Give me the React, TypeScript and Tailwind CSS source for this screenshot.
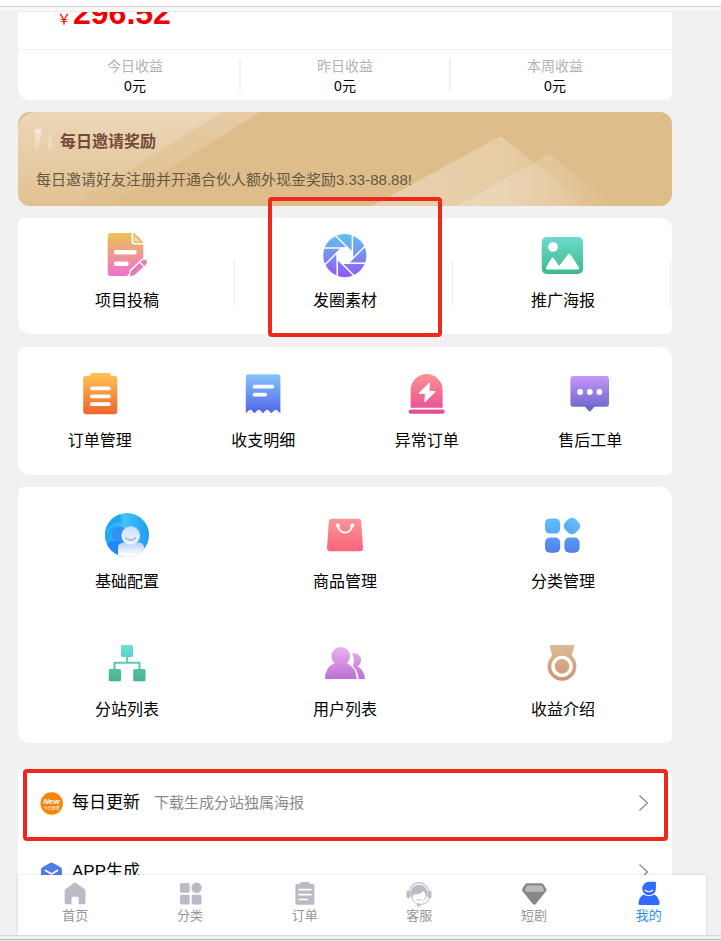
import type { ReactNode } from "react"

type GradientIconProps = {
  id: string
  from: string
  to: string
  children: ReactNode
}

// 44px menu icon, children can paint with url(#id)
function GradientIcon({ id, from, to, children }: GradientIconProps) {
  return (
    <svg className="h-11 w-11 overflow-visible" viewBox="0 0 44 44" fill={`url(#${id})`} aria-hidden="true">
      <defs>
        <linearGradient id={id} gradientUnits="userSpaceOnUse" x1="0" y1="2" x2="0" y2="42">
          <stop offset="0" stopColor={from} />
          <stop offset="1" stopColor={to} />
        </linearGradient>
      </defs>
      {children}
    </svg>
  )
}

function ArticleIcon() {
  return (
    <GradientIcon id="g-article" from="#ecc055" to="#ee72cc">
      <path d="M6 0h20.500v8.500a3 3 0 0 0 3 3h8.800V25L22 43H6a3.300 3.300 0 0 1-3.300-3.300V3.300A3.300 3.300 0 0 1 6 0Z" />
      <path d="M28.300 0h1L37.800 8.700v1.200h-7.500a2 2 0 0 1-2-2Z" />
      <path d="M29.500 3v4.300q0 1.400 1.400 1.400h4.300Z" fill="#f3dfb4" />
      <path d="M11 19.300h18.500M11 30.700h10.500" stroke="#fff" strokeWidth="4.400" strokeLinecap="round" />
      <path
        d="m24 44.500 1.200-6.800 9.800-9.200 2.200-1.800a3.300 3.300 0 0 1 4.700 4.600l-2 2.100-10 9.200Z"
        stroke="#fff"
        strokeWidth="1.400"
        fill="#e77cb4"
      />
      <path d="m34.500 29 4.600 4.600" stroke="#fff" strokeWidth="1.200" />
    </GradientIcon>
  )
}

function ApertureIcon() {
  return (
    <GradientIcon id="g-aperture" from="#5fc0ee" to="#8f5cf6">
      <circle cx="21.800" cy="22.600" r="21.600" />
      <g transform="translate(21.800 22.600)" stroke="#fff" strokeWidth="1.500">
        <path d="M7.400-3.100v6.200L3.100 7.400h-6.200L-7.400 3.100v-6.200l4.300-4.300h6.200Z" fill="#fff" />
        {[0, 45, 90, 135, 180, 225, 270, 315].map((angle) => (
          <path key={angle} d="M7.600-20.500V3.100" transform={`rotate(${angle})`} />
        ))}
      </g>
    </GradientIcon>
  )
}

function PosterIcon() {
  return (
    <GradientIcon id="g-poster" from="#70dcd2" to="#3db888">
      <rect x=".7" y="4" width="41.300" height="37" rx="5" />
      <circle cx="12" cy="14" r="4.800" fill="#fff" />
      <path
        d="m5.500 34.500 5.200-8.800q1-1.500 2 0l5.300 8L27 22q1.200-1.500 2.400 0l8.100 12.500q.8 1.500-1 1.500H6.500Q4.700 36 5.500 34.500Z"
        fill="#fff"
        stroke="#fff"
      />
    </GradientIcon>
  )
}

function ClipboardIcon() {
  return (
    <GradientIcon id="g-clipboard" from="#fcc252" to="#f0652f">
      <path d="M14 1h17q1.700 0 1.700 2v.8H36q3.300 0 3.300 3.300V39q0 3.300-3.300 3.300H8.600Q5.200 42.300 5.200 39V7.100q0-3.300 3.400-3.300h3.600V3q0-2 1.800-2Z" />
      <path d="M13.900 16.300h17M13.900 24.300h17M13.900 32.200h17" stroke="#fff" strokeWidth="3.800" strokeLinecap="round" />
    </GradientIcon>
  )
}

function ReceiptIcon() {
  return (
    <GradientIcon id="g-receipt" from="#86c6fa" to="#5062e6">
      <path d="M7.800 2.300h28.600q3 0 3 3v36L36 38.300q-1.300-1-2.600 0l-3 3-3-3q-1.300-1-2.600 0l-2.800 3-2.900-3q-1.300-1-2.600 0l-3 3-3-3q-1.300-1-2.600 0l-3.100 3v-36q0-3 3-3Z" />
      <path d="M13.600 14.700h17.800M13.600 22.700h10.600" stroke="#fff" strokeWidth="3.800" strokeLinecap="round" />
    </GradientIcon>
  )
}

function AlarmIcon() {
  return (
    <GradientIcon id="g-alarm" from="#fb9292" to="#e64a93">
      <path d="M5.600 35.700V18a16 16 0 0 1 32 0v17.700Z" />
      <rect x="3.600" y="37.500" width="36" height="4.300" rx="2.100" />
      <path d="M24.500 11 14 21.300l6.500.4-.7 8.300 10.300-10.300-6.300-.6Z" fill="#fff" stroke="#fff" strokeLinejoin="round" />
    </GradientIcon>
  )
}

function ChatIcon() {
  return (
    <GradientIcon id="g-chat" from="#cb98fc" to="#5d5fc6">
      <path d="M5.400 4H38q3 0 3 3v24.700q0 3-3 3H26.500l-3.600 4.100q-1.200 1.500-2.400 0l-3.600-4.100H5.400q-3 0-3-3V7q0-3 3-3Z" />
      <g fill="#fff">
        <circle cx="12.200" cy="20" r="2.900" />
        <circle cx="21.800" cy="20" r="2.900" />
        <circle cx="31.400" cy="20" r="2.900" />
      </g>
    </GradientIcon>
  )
}

function ProfileIcon() {
  return (
    <svg className="h-11 w-11" viewBox="0 0 44 44" aria-hidden="true">
      <defs>
        <linearGradient id="g-profile-bg" x1="0" y1="0" x2="1" y2="0">
          <stop offset="0" stopColor="#1ea4f6" />
          <stop offset=".45" stopColor="#45c3fb" />
          <stop offset="1" stopColor="#1f9bf0" />
        </linearGradient>
        <linearGradient id="g-profile-head" x1="0" y1="0" x2="0" y2="1">
          <stop offset="0" stopColor="#cbdffe" />
          <stop offset="1" stopColor="#eff4ff" />
        </linearGradient>
        <linearGradient id="g-profile-body" x1="0" y1="0" x2="0" y2="1">
          <stop offset="0" stopColor="#b6cdfb" />
          <stop offset=".85" stopColor="#fff" />
        </linearGradient>
        <clipPath id="c-profile">
          <circle cx="22" cy="22" r="22" />
        </clipPath>
      </defs>
      <g clipPath="url(#c-profile)">
        <rect width="44" height="44" fill="url(#g-profile-bg)" />
        <path d="M0 0h15l2 11Q6 13 1 27H0Z" fill="#20a6f5" />
        <path d="M1 26Q3 12 17 11l-1-2Q6 11 2 18Z" fill="#3fbdfb" />
        <circle cx="14.500" cy="21.500" r="8" fill="#3391f4" />
        <path d="M2 44V33q1-5 7-5h9v16Z" fill="#1e88fb" />
        <path d="M13 44V35q0-5.500 6-5.500h14q6 0 6 5.500v9Z" fill="url(#g-profile-body)" />
        <circle cx="25.700" cy="22.500" r="9.300" fill="url(#g-profile-head)" />
        <path d="M20.700 25q4.800 4.500 9.800 0" fill="none" stroke="#84aef4" strokeWidth="1.300" strokeLinecap="round" />
      </g>
    </svg>
  )
}

function BagIcon() {
  return (
    <GradientIcon id="g-bag" from="#fb9b9b" to="#f95f79">
      <path d="M9 5.700h26q3 0 3.200 3L40 35q0 3.300-3.200 3.300H7.200Q4 38.300 4 35L5.800 8.700q.2-3 3.200-3Z" />
      <g fill="#fff">
        <circle cx="14.800" cy="12.500" r="2.100" />
        <circle cx="29.200" cy="12.500" r="2.100" />
      </g>
      <path d="M14.800 12.500c1.500 9.500 13 9.500 14.400 0" fill="none" stroke="#fff" strokeWidth="1.900" />
    </GradientIcon>
  )
}

function CategoryIcon() {
  return (
    <GradientIcon id="g-category" from="#61c8fd" to="#5479e8">
      <rect x="4" y="5.400" width="15.200" height="15.200" rx="5" />
      <rect x="23.600" y="5.600" width="14.800" height="14.800" rx="5.600" transform="rotate(45 31 13)" />
      <rect x="4" y="24.500" width="15.200" height="15.200" rx="5" />
      <rect x="23.400" y="24.500" width="15.200" height="15.200" rx="5" />
    </GradientIcon>
  )
}

function SiteTreeIcon() {
  return (
    <GradientIcon id="g-tree" from="#68e6df" to="#47ad88">
      <rect x="16" y="4" width="12" height="12" rx="1.500" />
      <rect x="3.700" y="28" width="12.300" height="12.200" rx="1.500" />
      <rect x="28.200" y="28" width="12.300" height="12.200" rx="1.500" />
      <path d="M21 15h2v5.700h12.500V29h-2v-6.300h-23V29h-2v-8.300H21Z" />
    </GradientIcon>
  )
}

function UsersIcon() {
  return (
    <GradientIcon id="g-users" from="#efbaf4" to="#b767ce">
      <path d="M29 12.500a7 7 0 0 1 5.500 12.800Q41 28.500 42 38h-6.300Q35 30 29.800 25q2.800-6-.8-12.500Z" />
      <circle cx="17.700" cy="15.200" r="9.300" />
      <path d="M12 22h11.500Q33 25.500 33.700 38H2Q2 26 12 22Z" />
    </GradientIcon>
  )
}

function MedalIcon() {
  return (
    <GradientIcon id="g-medal" from="#dabf95" to="#cf8f78">
      <path d="M9.500 4h23q1 0 .8 1l-3 11-1.300 4H13l-1.600-4-2.700-11q-.2-1 .8-1Z" />
      <circle cx="21" cy="25.400" r="14.400" />
      <circle cx="21" cy="25.400" r="9" fill="none" stroke="#fff" strokeWidth="3.400" />
    </GradientIcon>
  )
}

const stats = [
  { label: "今日收益", value: "0元" },
  { label: "昨日收益", value: "0元" },
  { label: "本周收益", value: "0元" },
]

const promoItems = [
  { label: "项目投稿", icon: <ArticleIcon /> },
  { label: "发圈素材", icon: <ApertureIcon />, marked: true },
  { label: "推广海报", icon: <PosterIcon /> },
]

const orderItems = [
  { label: "订单管理", icon: <ClipboardIcon /> },
  { label: "收支明细", icon: <ReceiptIcon /> },
  { label: "异常订单", icon: <AlarmIcon /> },
  { label: "售后工单", icon: <ChatIcon /> },
]

const manageItems = [
  { label: "基础配置", icon: <ProfileIcon /> },
  { label: "商品管理", icon: <BagIcon /> },
  { label: "分类管理", icon: <CategoryIcon /> },
  { label: "分站列表", icon: <SiteTreeIcon /> },
  { label: "用户列表", icon: <UsersIcon /> },
  { label: "收益介绍", icon: <MedalIcon /> },
]

const tabs = [
  {
    label: "首页",
    icon: (
      <path d="M10.500 1.200q1.500-1 3 0l7.700 5.600q1.200 1 1.200 2.400v11.600q0 1.500-1.500 1.500h-5.300v-6q0-1.500-1.500-1.500H10q-1.500 0-1.500 1.500v6H3.200q-1.500 0-1.500-1.500V9.200q0-1.400 1.200-2.400Z" />
    ),
  },
  {
    label: "分类",
    icon: (
      <>
        <rect x="2" y="1" width="9.700" height="9.700" rx="1.500" />
        <circle cx="18.600" cy="5.800" r="5.200" />
        <rect x="2" y="12.700" width="9.700" height="9.700" rx="1.500" />
        <rect x="13.700" y="12.700" width="9.800" height="9.700" rx="1.500" />
      </>
    ),
  },
  {
    label: "订单",
    icon: (
      <>
        <path d="M8.500 0h7q1 0 1.500 2h2.800q1.600 0 1.600 1.600v17.600q0 1.600-1.600 1.600H4q-1.600 0-1.600-1.600V3.600Q2.400 2 4 2h3q.5-2 1.500-2Z" />
        <path d="M6 7.700h12M6 12.600h12M6 17.500h8" stroke="#fff" strokeWidth="1.700" strokeLinecap="round" />
      </>
    ),
  },
  {
    label: "客服",
    icon: (
      <>
        <path d="M2.500 10a9.500 9.300 0 0 1 19 0" fill="none" stroke="currentColor" strokeWidth="1.200" />
        <path d="M3.700 14C2.700 6.500 7 2.700 12 2.700S21.300 6.500 20.300 14l-1.500 1q-.2-4-2.300-6.300Q13 12.800 7.500 12.300 5.500 13 5.200 16Z" />
        <rect x="-.5" y="8.500" width="3.800" height="7.800" rx="1.800" />
        <rect x="20.700" y="8.500" width="3.800" height="7.800" rx="1.800" />
        <path
          d="M4.500 15q1.500 5 5.300 6.500M19.200 14.500q-.8 3.500-3.200 5M22.500 16q-2 6.500-11 6.700M9.300 17.300q2.700 2.200 5.400 0"
          fill="none"
          stroke="currentColor"
          strokeWidth="1"
        />
        <circle cx="11.500" cy="22.800" r="1.900" />
      </>
    ),
  },
  {
    label: "短剧",
    icon: (
      <>
        <path d="M5 1.200h14.500q1 0 1.700.9l3 4.600q.8 1.300-.2 2.500L14 21.800q-1.700 2-3.400 0L.5 9.200q-1-1.200-.2-2.500l3-4.600q.7-.9 1.700-.9Z" fill="#888" />
        <path d="M6 3.600h13q1 0 1.500.9l1.200 2.700q.7 2.500-1.500 2.500H4.600q-2 0-1.300-2.500l1.200-2.700q.5-.9 1.500-.9Z" fill="#bbb" />
      </>
    ),
  },
  {
    label: "我的",
    active: true,
    icon: (
      <>
        <path d="M11.500-.2h6.600q.8 0 .8.800v5.600a6.800 6.800 0 1 1-7.400-6.400Z" />
        <path d="M8 8.300q3.900 3 7.800 0" fill="none" stroke="#fff" strokeWidth="1.100" strokeLinecap="round" />
        <path d="M6.500 12.500q5.300 3.600 10.800 0 4.800 2.500 5.200 9 0 1.500-1.200 1.500H2.700q-1.200 0-1.200-1.500.4-6.500 5-9Z" />
      </>
    ),
  },
]

type MenuLinkProps = {
  label: string
  icon: ReactNode
  className: string
  children?: ReactNode
}

function MenuLink({ label, icon, className, children }: MenuLinkProps) {
  return (
    <a href="#" className={`relative flex flex-col items-center ${className}`}>
      {icon}
      <span className="text-base leading-6">{label}</span>
      {children}
    </a>
  )
}

function Chevron() {
  return (
    <svg className="h-4 w-4" viewBox="0 0 16 16" fill="none" stroke="#808080" aria-hidden="true">
      <path d="m6.500.5 8 7.500-8 7.500" strokeWidth="1.100" />
    </svg>
  )
}

function InviteBanner() {
  return (
    <section className="relative overflow-hidden rounded-xl bg-[#dfbd8a] px-[18px] pb-[14px] pt-[18px]">
      <svg className="absolute left-0 top-0 h-full w-[260px]" viewBox="0 0 260 94" aria-hidden="true">
        <defs>
          <linearGradient id="g-shine" x1="0" y1="0" x2="0" y2="1">
            <stop offset="0" stopColor="#fff" stopOpacity=".22" />
            <stop offset="1" stopColor="#fff" stopOpacity=".03" />
          </linearGradient>
          <linearGradient id="g-quote" x1="0" y1="0" x2="0" y2="1">
            <stop offset="0" stopColor="#fff" stopOpacity=".5" />
            <stop offset="1" stopColor="#fff" stopOpacity=".15" />
          </linearGradient>
        </defs>
        <path d="M0 94V16Q2 2 17 0h187L54 94Z" fill="url(#g-shine)" />
        <path d="M0 94V16Q2 2 17 0h225L92 94Z" fill="url(#g-shine)" />
        <path d="M17 17h7l-4 21h-3ZM32 21l3.500 17H29Z" fill="url(#g-quote)" />
      </svg>
      <svg className="absolute right-[54px] top-0 h-full w-[250px]" viewBox="350 0 250 94" aria-hidden="true">
        <defs>
          <linearGradient id="g-peak" x1="0" y1="0" x2="1" y2="0">
            <stop offset="0" stopColor="#fff" stopOpacity=".3" />
            <stop offset=".6" stopColor="#fff" stopOpacity=".24" />
            <stop offset="1" stopColor="#fff" stopOpacity=".02" />
          </linearGradient>
        </defs>
        <path d="m354 94 129-70 86 70Z" fill="url(#g-peak)" />
        <path d="m439 94 92-52 65 52Z" fill="url(#g-peak)" opacity=".6" />
      </svg>
      <h2 className="relative pl-6 text-base font-bold leading-6 text-[#754b38]">每日邀请奖励</h2>
      <p className="relative mt-3.5 text-[15px] leading-6 text-[#655843]">
        每日邀请好友注册并开通合伙人额外现金奖励3.33-88.88!
      </p>
    </section>
  )
}

export default function App() {
  return (
    <div className="flex h-screen flex-col overflow-hidden bg-[#f1f1f1] font-['Liberation_Sans','Noto_Sans_CJK_SC',sans-serif] text-black">
      <header className="h-3 shrink-0 border-b border-[#ececec] bg-white pt-1.5">
        <div className="h-full border-t border-[#cfcfcf] bg-[#f7f7f7]" />
      </header>

      <main className="flex min-h-0 flex-1 flex-col overflow-hidden pl-[18px] pr-[49px] *:shrink-0">
        <section className="rounded-bl-xl rounded-br-md bg-white">
          <div className="-mt-[15px] flex h-[52px] items-baseline gap-0.5 pl-[39px] text-[#f00000]">
            <span className="text-sm">{"\uFFE5"}</span>
            <strong className="text-[32px] leading-8">296.52</strong>
          </div>
          <dl className="flex border-t border-[#efefef] px-3 pb-1 pt-1.5">
            {stats.map((stat) => (
              <div
                key={stat.label}
                className="relative flex-1 text-center text-sm leading-5 not-last:after:absolute not-last:after:-right-px not-last:after:top-[3px] not-last:after:h-8 not-last:after:w-0.5 not-last:after:bg-[#f0f0f0]"
              >
                <dt className="text-[#adb4b3]">{stat.label}</dt>
                <dd>{stat.value}</dd>
              </div>
            ))}
          </dl>
        </section>

        <div className="mt-3">
          <InviteBanner />
        </div>

        <nav className="mt-3 grid grid-cols-3 rounded-md rounded-bl-xl rounded-tr-xl bg-white">
          {promoItems.map((item) => (
            <MenuLink
              key={item.label}
              label={item.label}
              icon={item.icon}
              className="gap-3 pb-[21px] pt-[15px] after:absolute after:right-px after:top-[42px] after:h-[46px] after:w-px after:bg-[#ededed]"
            >
              {item.marked && (
                <span className="absolute -bottom-[3px] -top-[21px] left-8 right-3 z-10 rounded border-4 border-[#ee281b]" />
              )}
            </MenuLink>
          ))}
        </nav>

        <nav className="mt-[13px] grid grid-cols-4 rounded-md rounded-bl-xl rounded-tr-xl bg-white">
          {orderItems.map((item) => (
            <MenuLink key={item.label} label={item.label} icon={item.icon} className="gap-[13px] pb-[22px] pt-[25px]" />
          ))}
        </nav>

        <nav className="mt-3 grid grid-cols-3 rounded-md rounded-bl-xl rounded-tr-xl bg-white">
          {manageItems.map((item) => (
            <MenuLink key={item.label} label={item.label} icon={item.icon} className="gap-[13px] pb-[21px] pt-[26px]" />
          ))}
        </nav>

        <section className="mt-[26px] rounded-tl-md rounded-tr-xl bg-white">
          <a href="#" className="relative flex h-[69px] items-center pb-0.5 pl-[22px] pr-[23px]">
            <svg className="h-6 w-6" viewBox="0 0 24 24" aria-hidden="true">
              <circle cx="11.700" cy="12.500" r="11.200" fill="#f9840d" />
              <text x="11.500" y="12.500" fontSize="8" fontWeight="bold" fontStyle="italic" textAnchor="middle" fill="#fff">
                New
              </text>
              <text x="11.700" y="19" fontSize="4" textAnchor="middle" fill="#fff">
                今日更新
              </text>
            </svg>
            <span className="ml-2 text-[17px] leading-6">每日更新</span>
            <span className="ml-3.5 text-[15px] leading-6 text-[#8a8a8a]">下载生成分站独属海报</span>
            <span className="ml-auto">
              <Chevron />
            </span>
            <span className="absolute -bottom-[3px] left-[5px] right-1 top-0 z-10 rounded border-4 border-[#ee281b]" />
          </a>
          <a href="#" className="flex h-[69px] items-center pb-0.5 pl-[22px] pr-[23px]">
            <svg className="h-6 w-6" viewBox="0 0 24 24" aria-hidden="true">
              <path d="M10 3q1.500-.9 3 0l7.500 4.200Q22 8 22 9.700v8l-9 6h-3l-9-6v-8Q1 8 2.500 7.200Z" fill="#4e7de8" />
              <path d="m5.500 10.500 6 3.500 6-3.500M11.500 14v7" fill="none" stroke="#fff" strokeWidth="1.700" strokeLinecap="round" />
            </svg>
            <span className="ml-2 text-[17px] leading-6">APP生成</span>
            <span className="ml-auto">
              <Chevron />
            </span>
          </a>
        </section>
      </main>

      <nav className="z-20 ml-[18px] mr-[15px] grid shrink-0 grid-cols-6 bg-white pb-2.5 pt-[7px] shadow-[0_0_3px_rgba(0,0,0,0.14)]">
        {tabs.map((tab) => (
          <a
            key={tab.label}
            href="#"
            className={`flex flex-col items-center text-[13px] leading-[19px] ${tab.active ? "text-[#2b8fe8]" : "text-[#969696]"}`}
          >
            <svg
              className={`h-6 w-6 overflow-visible ${tab.active ? "text-[#306cff]" : "text-[#bbbbc5]"}`}
              viewBox="0 0 24 24"
              fill="currentColor"
              aria-hidden="true"
            >
              {tab.icon}
            </svg>
            {tab.label}
          </a>
        ))}
      </nav>

      <footer className="z-20 h-1.5 shrink-0 border-t border-[#d8d8d8] bg-[#f1f1f1] pt-[3px]">
        <div className="h-0.5 border-t border-[#aebfb9] bg-[#e0ebe8]" />
      </footer>
    </div>
  )
}
